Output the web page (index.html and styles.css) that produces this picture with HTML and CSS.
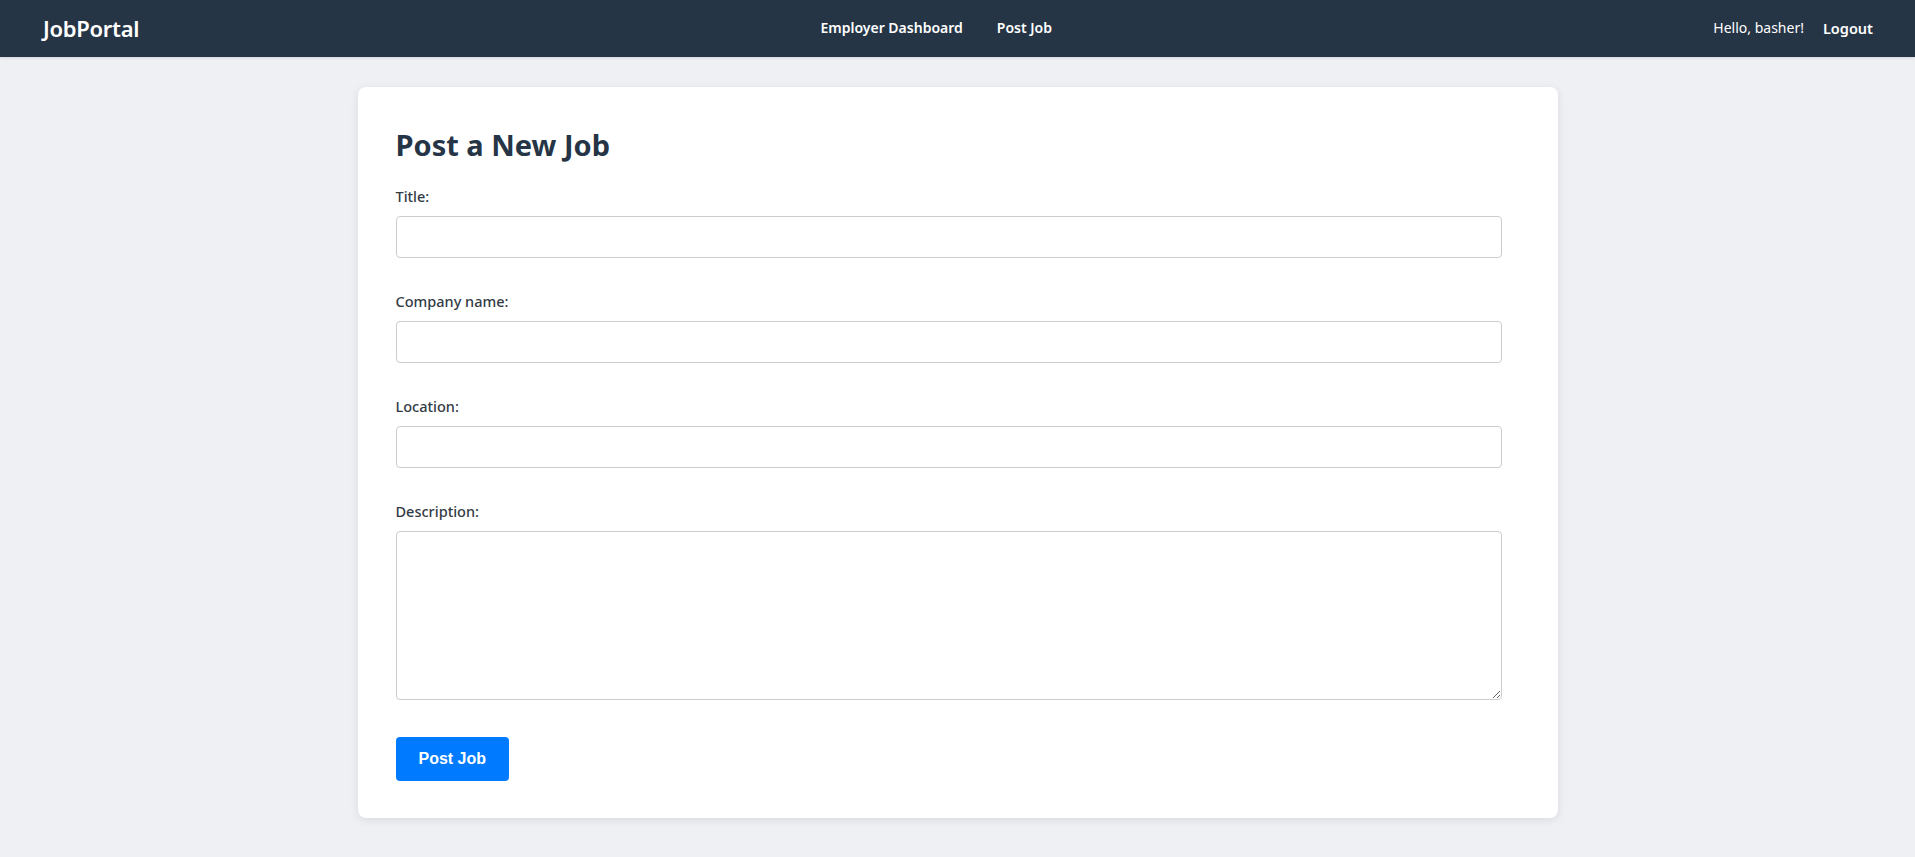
FILE: index.html
```html
<!DOCTYPE html>
<html lang="en">
<head>
<meta charset="utf-8">
<title>Post a New Job - JobPortal</title>
<link rel="stylesheet" href="styles.css">
</head>
<body>
<header class="navbar">
  <a class="brand" href="#">JobPortal</a>
  <nav class="nav-center">
    <a class="nav-link" href="#">Employer Dashboard</a>
    <a class="nav-link" href="#">Post Job</a>
  </nav>
  <div class="nav-right">
    <span class="greeting">Hello, basher!</span>
    <a class="nav-link nav-link-logout" href="#">Logout</a>
  </div>
</header>
<main class="page">
  <section class="card">
    <h1 class="card-title">Post a New Job</h1>
    <form class="job-form">
      <div class="field">
        <label class="field-label" for="title">Title:</label>
        <input class="field-input" id="title" type="text">
      </div>
      <div class="field">
        <label class="field-label" for="company">Company name:</label>
        <input class="field-input" id="company" type="text">
      </div>
      <div class="field">
        <label class="field-label" for="location">Location:</label>
        <input class="field-input" id="location" type="text">
      </div>
      <div class="field">
        <label class="field-label" for="description">Description:</label>
        <textarea class="field-input field-textarea" id="description"></textarea>
      </div>
      <button class="submit-btn" type="submit">Post Job</button>
    </form>
  </section>
</main>
</body>
</html>
```
FILE: styles.css
```css
* { box-sizing: border-box; }

html, body {
  margin: 0;
  padding: 0;
}

body {
  background: #eff0f4;
  font-family: "Noto Sans", "Open Sans", sans-serif;
  color: #263546;
  min-height: 857px;
}

.navbar {
  height: 57px;
  background: #263546;
  display: flex;
  align-items: center;
  justify-content: space-between;
  padding: 0 42px 2px 42px;
  box-shadow: 0 1px 3px rgba(0, 0, 0, 0.12);
}

.brand {
  color: #ffffff;
  text-decoration: none;
  font-size: 22px;
  font-weight: 600;
  letter-spacing: -0.3px;
  margin-left: 1px;
}

.nav-center {
  display: flex;
  gap: 34px;
  padding-left: 20px;
}

.nav-link {
  color: #ffffff;
  text-decoration: none;
  font-size: 14px;
  font-weight: 600;
}

.nav-link-logout {
  font-size: 14.5px;
}

.nav-right {
  display: flex;
  align-items: center;
  gap: 19px;
}

.greeting {
  color: #ffffff;
  font-size: 14px;
}

.page {
  padding-top: 30px;
  padding-bottom: 39px;
}

.card {
  width: 1200px;
  margin: 0 auto;
  background: #ffffff;
  border-radius: 8px;
  box-shadow: 0 2px 10px rgba(0, 0, 0, 0.09);
  padding: 38px 38px 37px 38px;
}

.card-title {
  margin: 0 0 21px 0;
  font-size: 29px;
  line-height: 40px;
  font-weight: 700;
  color: #263546;
}

.job-form {
  display: flex;
  flex-direction: column;
}

.field {
  display: flex;
  flex-direction: column;
  margin-bottom: 33px;
}

.field-label {
  font-size: 14.5px;
  line-height: 20px;
  font-weight: 500;
  color: #333b45;
  margin-bottom: 10px;
}

.field-input {
  width: 1106px;
  height: 42px;
  border: 1px solid #cccccc;
  border-radius: 4px;
  background: #ffffff;
  font-family: inherit;
  font-size: 15px;
  padding: 8px 10px;
}

.field-textarea {
  height: 169px;
  resize: vertical;
}

.field:last-of-type {
  margin-bottom: 37px;
}

.submit-btn {
  align-self: flex-start;
  background: #007bff;
  color: #ffffff;
  border: none;
  border-radius: 4px;
  font-family: "Liberation Sans", Arial, sans-serif;
  font-weight: 700;
  font-size: 16px;
  line-height: 20px;
  padding: 12px 23px;
  cursor: pointer;
}
```
